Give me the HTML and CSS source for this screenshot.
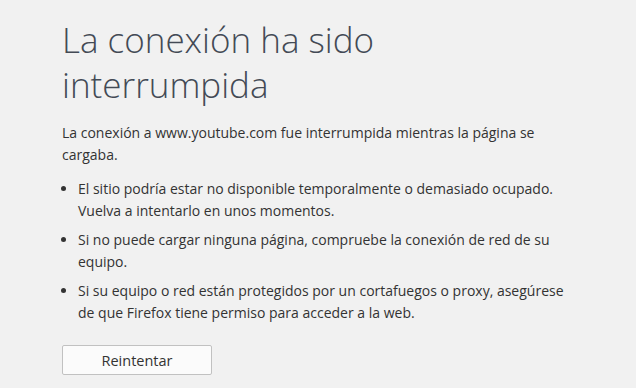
FILE: index.html
```html
<!DOCTYPE html>
<html lang="es">
<head>
<meta charset="utf-8">
<title>Problema al cargar la página</title>
<link rel="stylesheet" href="styles.css">
</head>
<body>
<main class="container">
  <h1 class="title">La conexión ha sido interrumpida</h1>
  <p class="desc">La conexión a www.youtube.com fue interrumpida mientras la página se cargaba.</p>
  <ul class="tips">
    <li>El sitio podría estar no disponible temporalmente o demasiado ocupado. Vuelva a intentarlo en unos momentos.</li>
    <li>Si no puede cargar ninguna página, compruebe la conexión de red de su equipo.</li>
    <li>Si su equipo o red están protegidos por un cortafuegos o proxy, asegúrese de que Firefox tiene permiso para acceder a la web.</li>
  </ul>
  <button class="retry" type="button">Reintentar</button>
</main>
</body>
</html>
```

FILE: styles.css
```css
html, body {
  margin: 0;
  padding: 0;
  background: #f1f1f1;
}
body {
  font-family: "Open Sans", "Noto Sans", sans-serif;
  color: #333;
  font-size: 14px;
}
.container {
  padding: 17px 0 0 62px;
  width: 512px;
}
.title {
  margin: 0;
  font-size: 35px;
  font-weight: 300;
  line-height: 45px;
  color: #434a55;
  width: 340px;
}
.desc {
  margin: 15px 0 0;
  line-height: 22px;
}
.tips {
  margin: 12px 0 0;
  padding: 0 0 0 16px;
}
.tips li {
  line-height: 22px;
  margin-bottom: 7px;
}
.retry {
  margin-top: 14px;
  width: 150px;
  height: 30px;
  background: #fbfbfb;
  border: 1px solid #c1c1c1;
  border-radius: 2px;
  font-family: inherit;
  font-size: 14.5px;
  color: #333;
  padding: 0;
}
```
